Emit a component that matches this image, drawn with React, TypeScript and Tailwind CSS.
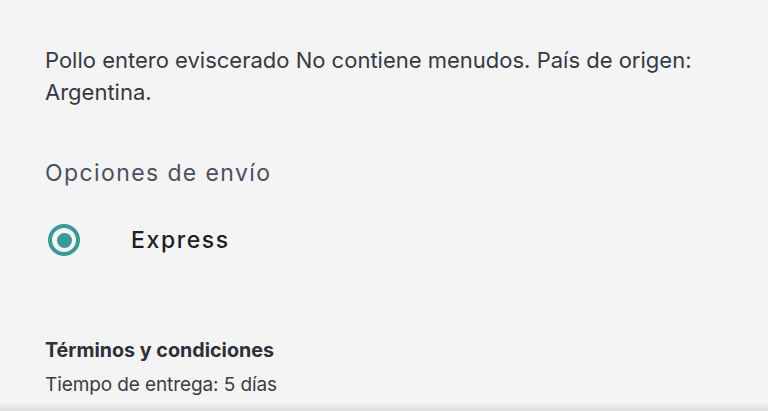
import React from "react";

function Radio({ checked }: { checked: boolean }) {
  return (
    <span className="flex h-[32px] w-[32px] items-center justify-center rounded-full border-[4px] border-[#3a9a95]">
      {checked && <span className="h-[15px] w-[15px] rounded-full bg-[#3a9a95]"></span>}
    </span>
  );
}

export default function App() {
  return (
    <div className="relative h-[411px] w-full overflow-hidden bg-[#f4f4f4] font-['Inter','Noto_Sans',sans-serif]">
      <div className="flex flex-col pl-[45px] pr-[30px] pt-[44px]">
        <p className="text-[22px] leading-[32px] text-[#363943]">
          Pollo entero eviscerado No contiene menudos. País de origen: Argentina.
        </p>

        <h2 className="mt-[50px] text-[23px] leading-[30px] tracking-[1.4px] text-[#4a5060]">Opciones de envío</h2>

        <label className="ml-[3px] mt-[36px] flex items-center">
          <Radio checked />
          <span className="ml-[51px] text-[23px] font-medium leading-[30px] tracking-[1.6px] text-[#1c1d28]">Express</span>
        </label>

        <div className="mt-[81px]">
          <h3 className="text-[19.7px] font-bold leading-[26px] text-[#2e3039]">Términos y condiciones</h3>
          <p className="mt-[9px] text-[19px] leading-[26px] tracking-[-0.1px] text-[#3a3d46]">Tiempo de entrega: 5 días</p>
        </div>
      </div>
      <div className="pointer-events-none absolute bottom-0 left-0 h-[9px] w-full bg-gradient-to-b from-transparent to-[#dcdcdc]"></div>
    </div>
  );
}
